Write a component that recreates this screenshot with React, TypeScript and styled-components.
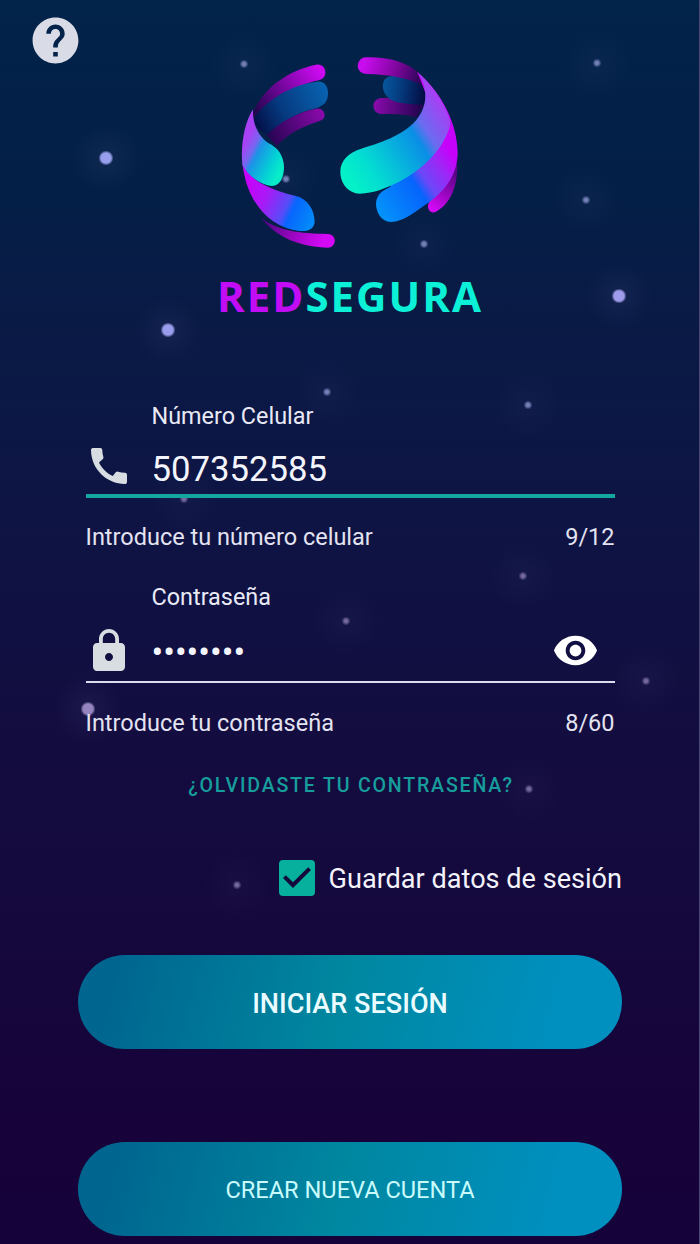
import { FC, ReactNode, useState } from 'react';
import styled, { createGlobalStyle } from 'styled-components';
import { MdCall, MdCheckBox, MdCheckBoxOutlineBlank, MdHelp, MdLock, MdVisibility } from 'react-icons/md';

const GlobalStyle = createGlobalStyle`
  * {
    box-sizing: border-box;
  }
  body {
    margin: 0;
    background: #17023a;
    font-family: Roboto, 'Liberation Sans', sans-serif;
  }
  button {
    border: none;
    padding: 0;
    background: none;
    color: inherit;
    font-family: inherit;
    cursor: pointer;
  }
  svg {
    display: block;
  }
`;

const Page = styled.main`
  position: relative;
  height: 1244px;
  overflow: hidden;
  border-right: 1px solid #4b4775;
  background: linear-gradient(180deg, #02234a 0%, #041f47 16%, #091a45 25%, #0e1444 42%, #130d40 58%, #15073b 78%, #17023a 92%, #16023a 100%);
`;

const Star = styled.i<{ $x: number; $y: number; $big?: boolean; $color: string }>`
  position: absolute;
  left: ${({ $x }) => $x - 36}px;
  top: ${({ $y }) => $y - 36}px;
  width: 72px;
  height: 72px;
  background:
    radial-gradient(circle, ${({ $color, $big }) => `${$color} ${$big ? 5 : 1.5}px, transparent ${$big ? 7.5 : 4.5}px`}),
    radial-gradient(circle, rgba(140, 140, 200, ${({ $big }) => ($big ? 0.08 : 0.045)}), transparent 34px);
`;

const Header = styled.header`
  position: relative;
  display: grid;
  grid-template-columns: 1fr 260px 1fr;
  align-items: start;
  width: 700px;
  height: 260px;
`;

const HelpButton = styled.button`
  width: 55px;
  margin: 13px 0 0 27.5px;
  color: #d9dbe6;
`;

const LogoBox = styled.div`
  margin-top: 40px;
`;

const Brand = styled.h1`
  position: relative;
  width: 700px;
  margin: 6px 0 0;
  color: #c20cf5;
  font-family: 'Open Sans', 'Noto Sans', sans-serif;
  font-size: 42px;
  font-weight: 700;
  line-height: 60px;
  letter-spacing: 2px;
  text-align: center;
  span {
    color: #0cf0d8;
  }
`;

const Form = styled.form`
  position: relative;
  display: flex;
  flex-direction: column;
  width: 544px;
  margin: 75px 0 0 78px;
`;

const Field = styled.div`
  display: flex;
  flex-direction: column;
  width: 529px;
  margin-left: 7.5px;
`;

const PasswordField = styled(Field)`
  margin-top: 30px;
`;

const Label = styled.label`
  padding-left: 66px;
  color: #e9eaf6;
  font-size: 23.4px;
  line-height: 30px;
`;

const InputRow = styled.div<{ $active?: boolean }>`
  display: flex;
  align-items: center;
  height: ${({ $active }) => ($active ? 67 : 71)}px;
  padding-top: ${({ $active }) => ($active ? 6 : 8)}px;
  border-bottom: ${({ $active }) => ($active ? '4px solid #13a79f' : '2px solid #dcdcee')};
`;

const FieldIcon = styled.span`
  flex: none;
  width: 66.5px;
  margin-left: -0.5px;
  color: #d8dde2;
`;

const Value = styled.span<{ $masked?: boolean }>`
  flex: 1;
  margin-top: ${({ $masked }) => ($masked ? 2 : 7)}px;
  color: #f4f5fc;
  font-size: 34.7px;
  line-height: 48px;
`;

const EyeButton = styled.button`
  margin: 0 15.5px 0 0;
  color: #fff;
`;

const Helper = styled.div`
  display: flex;
  justify-content: space-between;
  color: #e3e3f1;
  font-size: 23.5px;
  line-height: 30px;
`;

const PhoneHelper = styled(Helper)`
  margin-top: 24px;
`;

const PasswordHelper = styled(Helper)`
  margin-top: 25px;
`;

const ForgotLink = styled.button`
  align-self: center;
  margin-top: 33px;
  padding-left: 2px;
  color: #179e9c;
  font-size: 19.6px;
  font-weight: 500;
  line-height: 30px;
  letter-spacing: 1.8px;
`;

const Remember = styled.button`
  display: flex;
  align-items: center;
  align-self: flex-end;
  gap: 7.5px;
  margin-top: 51px;
  font-size: 27.1px;
  line-height: 48px;
  svg {
    color: #06b09c;
  }
  span {
    padding-top: 3px;
    color: #f4f3fb;
  }
`;

const PillButton = styled.button<{ $strong?: boolean }>`
  height: 94px;
  padding-top: ${({ $strong }) => ($strong ? 3 : 2)}px;
  border-radius: 47px;
  background: linear-gradient(104deg, #00658f 6%, #0087a0 48%, #0090c0 88%);
  color: ${({ $strong }) => ($strong ? '#eafcff' : '#c9fbfd')};
  font-size: ${({ $strong }) => ($strong ? 27.1 : 23.6)}px;
  font-weight: ${({ $strong }) => ($strong ? 500 : 400)};
`;

const Actions = styled.div`
  display: flex;
  flex-direction: column;
  gap: 93px;
  margin-top: 52px;
`;

// -------------------------------------------------------------

const bigStars = [
  [106, 158, '#98a0ee'],
  [168, 330, '#9a9cec'],
  [619, 296, '#a09cec'],
  [88, 709, '#9484c0'],
];

const smallStars = [
  [244, 64], [597, 63], [586, 200], [286, 179], [424, 244], [327, 392], [528, 405], [184, 499],
  [523, 576], [346, 621], [646, 681], [529, 789], [237, 885],
];

const Logo: FC = () => (
  <svg width="260" height="220" viewBox="0 0 780 660">
    <defs>
      <linearGradient id="backLeft" gradientUnits="userSpaceOnUse" x1="110" y1="220" x2="300" y2="90">
        <stop offset="0" stopColor="#22064e" />
        <stop offset=".45" stopColor="#72069a" />
        <stop offset="1" stopColor="#cd0af2" />
      </linearGradient>
      <linearGradient id="blueLeft" gradientUnits="userSpaceOnUse" x1="105" y1="260" x2="320" y2="155">
        <stop offset="0" stopColor="#020e45" />
        <stop offset=".4" stopColor="#063a80" />
        <stop offset="1" stopColor="#0862b0" />
      </linearGradient>
      <linearGradient id="lowLeft" gradientUnits="userSpaceOnUse" x1="145" y1="300" x2="310" y2="220">
        <stop offset="0" stopColor="#240450" />
        <stop offset="1" stopColor="#8a0aac" />
      </linearGradient>
      <linearGradient id="frontLeft" gradientUnits="userSpaceOnUse" x1="70" y1="320" x2="185" y2="380">
        <stop offset="0" stopColor="#a842f4" />
        <stop offset=".22" stopColor="#7766f0" />
        <stop offset=".36" stopColor="#1b94e6" />
        <stop offset=".75" stopColor="#04cfd6" />
        <stop offset="1" stopColor="#08ecca" />
      </linearGradient>
      <linearGradient id="bandLeft" gradientUnits="userSpaceOnUse" x1="80" y1="440" x2="280" y2="530">
        <stop offset="0" stopColor="#c602fa" />
        <stop offset=".3" stopColor="#a81af6" />
        <stop offset=".6" stopColor="#584cf8" />
        <stop offset=".7" stopColor="#0866fc" />
        <stop offset="1" stopColor="#0488fa" />
      </linearGradient>
      <linearGradient id="tailLeft" gradientUnits="userSpaceOnUse" x1="130" y1="540" x2="310" y2="600">
        <stop offset="0" stopColor="#4a0580" />
        <stop offset=".45" stopColor="#9006b8" />
        <stop offset="1" stopColor="#d40af6" />
      </linearGradient>
      <linearGradient id="backRight" gradientUnits="userSpaceOnUse" x1="430" y1="77" x2="615" y2="130">
        <stop offset="0" stopColor="#c80cee" />
        <stop offset=".5" stopColor="#80069e" />
        <stop offset="1" stopColor="#1c0448" />
      </linearGradient>
      <linearGradient id="blueRight" gradientUnits="userSpaceOnUse" x1="490" y1="140" x2="615" y2="155">
        <stop offset="0" stopColor="#07569c" />
        <stop offset=".4" stopColor="#053c80" />
        <stop offset="1" stopColor="#020c42" />
      </linearGradient>
      <linearGradient id="lowRight" gradientUnits="userSpaceOnUse" x1="462" y1="195" x2="600" y2="210">
        <stop offset="0" stopColor="#8a0aac" />
        <stop offset="1" stopColor="#240450" />
      </linearGradient>
      <linearGradient id="frontRight" gradientUnits="userSpaceOnUse" x1="380" y1="400" x2="680" y2="210">
        <stop offset="0" stopColor="#04f0c8" />
        <stop offset=".2" stopColor="#04dcd2" />
        <stop offset=".66" stopColor="#0a8ee6" />
        <stop offset=".76" stopColor="#6a6cf0" />
        <stop offset="1" stopColor="#a93ef4" />
      </linearGradient>
      <linearGradient id="bandRight" gradientUnits="userSpaceOnUse" x1="475" y1="500" x2="700" y2="350">
        <stop offset="0" stopColor="#0490fa" />
        <stop offset=".48" stopColor="#0664fc" />
        <stop offset=".6" stopColor="#6a48f8" />
        <stop offset=".82" stopColor="#9c28f6" />
        <stop offset="1" stopColor="#c602fa" />
      </linearGradient>
      <linearGradient id="tailRight" gradientUnits="userSpaceOnUse" x1="705" y1="400" x2="635" y2="505">
        <stop offset="0" stopColor="#5a0488" />
        <stop offset=".5" stopColor="#9606bc" />
        <stop offset="1" stopColor="#d408f6" />
      </linearGradient>
    </defs>
    <path fill="url(#lowLeft)" d="M288 206C306 204 314 216 314 226C313 240 302 242 290 246C245 260 200 285 170 318L135 280C175 250 235 215 288 206Z" />
    <path fill="url(#backLeft)" d="M288 74C304 70 316 82 316 97C316 110 308 118 296 121C220 137 150 180 104 250L98 220C130 140 210 90 288 74Z" />
    <path fill="url(#blueLeft)" d="M290 125C314 122 324 140 324 160C324 184 312 197 292 203C230 217 180 245 142 284C118 274 104 258 100 234C146 174 218 134 290 125Z" />
    <path fill="url(#tailLeft)" d="M122 532C170 573 240 581 324 582A20.500 20.500 0 0 1 324 623C250 622 170 597 122 532Z" />
    <path fill="url(#bandLeft)" d="M67 368C85 412 130 445 228 468C262 476 283 508 284 545C283 568 262 575 238 573C150 563 80 490 67 368Z" />
    <path fill="url(#frontLeft)" d="M99 208C75 245 61 310 67 374C85 408 120 434 156 438C182 436 192 410 192 380C191 345 172 322 145 309C117 289 97 255 99 208Z" />

    <path fill="url(#lowRight)" d="M484 174C530 174 575 182 612 194L590 233C560 222 520 222 484 222A24 24 0 0 1 484 174Z" />
    <path fill="url(#blueRight)" d="M512 109C550 106 592 113 616 130L614 194C585 194 550 192 524 184C480 170 478 113 512 109Z" />
    <path fill="url(#backRight)" d="M438 52C500 50 560 65 594 97L617 142C570 112 505 104 438 102A25 25 0 0 1 438 52Z" />
    <path fill="url(#tailRight)" d="M712 370C714 440 690 493 648 515C634 522 623 512 624 496L640 450Z" />
    <path fill="url(#bandRight)" d="M592 96C645 140 712 230 713 340C712 400 680 450 625 488C590 512 552 545 512 546C485 545 468 520 468 490C470 464 486 452 510 441L570 350L640 220Z" />
    <path fill="url(#frontRight)" d="M592 96C629 127 672 180 690 240Q692 250 690 258C670 330 605 390 540 424C500 444 460 461 420 461C385 460 361 430 361 395C361 360 388 337 424 326C490 307 562 280 595 232C626 190 621 134 592 96Z" />
  </svg>
);

interface IFieldInputProps {
  icon: ReactNode;
  value: string;
  active?: boolean;
  masked?: boolean;
  children?: ReactNode;
}

const FieldInput: FC<IFieldInputProps> = ({ icon, value, active, masked, children }) => (
  <InputRow $active={active}>
    <FieldIcon>{icon}</FieldIcon>
    <Value $masked={masked}>{value}</Value>
    {children}
  </InputRow>
);

const App: FC = () => {
  const [visible, setVisible] = useState(false);
  const [remember, setRemember] = useState(true);

  return (
    <>
      <GlobalStyle />
      <Page>
        {smallStars.map(([x, y]) => (
          <Star key={`${x}-${y}`} $x={x} $y={y} $color={y < 450 ? '#7480b8' : '#74689c'} />
        ))}
        {bigStars.map(([x, y, color]) => (
          <Star key={`${x}-${y}`} $x={Number(x)} $y={Number(y)} $color={String(color)} $big />
        ))}
        <Header>
          <HelpButton type="button" aria-label="Ayuda"><MdHelp size={55} /></HelpButton>
          <LogoBox><Logo /></LogoBox>
        </Header>
        <Brand>RED<span>SEGURA</span></Brand>
        <Form>
          <Field>
            <Label>Número Celular</Label>
            <FieldInput icon={<MdCall size={48} />} value="507352585" active />
            <PhoneHelper>
              <span>Introduce tu número celular</span>
              <span>9/12</span>
            </PhoneHelper>
          </Field>
          <PasswordField>
            <Label>Contraseña</Label>
            <FieldInput icon={<MdLock size={48} />} value={visible ? 'redsegur' : '••••••••'} masked={!visible}>
              <EyeButton type="button" aria-label="Mostrar" onClick={() => setVisible(!visible)}>
                <MdVisibility size={47} />
              </EyeButton>
            </FieldInput>
            <PasswordHelper>
              <span>Introduce tu contraseña</span>
              <span>8/60</span>
            </PasswordHelper>
          </PasswordField>
          <ForgotLink type="button">¿OLVIDASTE TU CONTRASEÑA?</ForgotLink>
          <Remember type="button" onClick={() => setRemember(!remember)}>
            {remember ? <MdCheckBox size={48} /> : <MdCheckBoxOutlineBlank size={48} />}
            <span>Guardar datos de sesión</span>
          </Remember>
          <Actions>
            <PillButton type="button" $strong>INICIAR SESIÓN</PillButton>
            <PillButton type="button">CREAR NUEVA CUENTA</PillButton>
          </Actions>
        </Form>
      </Page>
    </>
  );
}

export default App;
